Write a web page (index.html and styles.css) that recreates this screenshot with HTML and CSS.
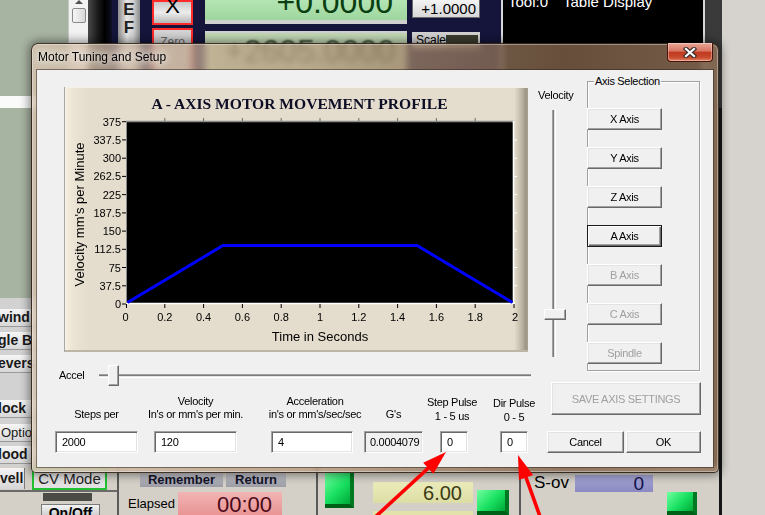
FILE: index.html
```html
<!DOCTYPE html>
<html>
<head>
<meta charset="utf-8">
<title>Motor Tuning and Setup</title>
<link rel="stylesheet" href="styles.css">
</head>
<body>
<div class="screen">
  <div class="top">
    <div class="tl"><div class="whitebar"></div></div>
    <div class="scroll"><div class="sb-up"></div><div class="sb-thumb"></div></div>
    <div class="dk"></div>
    <div class="nv w6"></div>
    <div class="ef"><span>E</span><span>F</span></div>
    <div class="nv w12"></div>
    <div class="xcol"><div class="xbtn">X</div><div class="zbtn">Zero</div></div>
    <div class="nv w12"></div>
    <div class="dro"><div class="dro1">+0.0000</div><div class="dro-g1"></div><div class="dro-g2"></div><div class="dro2">+2605.0000</div></div>
    <div class="nv w5"></div>
    <div class="stepcol"><div class="step">+1.0000</div><div class="stepgap"></div><div class="scale"><span>Scale</span><i></i></div></div>
    <div class="nv w21"></div>
    <div class="tool"><span>Tool:0</span><span class="td">Table Display</span></div>
    <div class="dk2"></div>
    <div class="rg"></div>
  </div>
  <div class="mid">
    <div class="lcol">
      <div class="lgreen"></div>
      <div class="lb m11">wind</div>
      <div class="lb m5">gle B</div>
      <div class="lb m5">evers</div>
      <div class="lb m27">lock</div>
      <div class="lb m6 thin">Optio</div>
      <div class="lb m4">lood</div>
    </div>
    <div class="mc"></div>
    <div class="rg edge"></div>
  </div>
  <div class="bot">
    <div class="seg1">
      <div class="row1"><div class="vell">vell</div><div class="cv">CV Mode</div></div>
      <div class="sep"></div>
      <div class="led"></div>
      <div class="onoff">On/Off</div>
    </div>
    <div class="vline"></div>
    <div class="seg2">
      <div class="rrow"><div class="mbtn rem">Remember</div><div class="mbtn ret">Return</div></div>
      <div class="erow"><div class="elab">Elapsed</div><div class="pink">00:00</div></div>
    </div>
    <div class="vline"></div>
    <div class="seg3">
      <div class="green g1"></div>
      <div class="ycol"><div class="ybox">6.00</div><div class="ybox2"></div></div>
      <div class="green g2"></div>
    </div>
    <div class="vline"></div>
    <div class="seg4">
      <div class="sov">S-ov</div>
      <div class="bbox">0</div>
      <div class="green g3"></div>
    </div>
    <div class="rg edge"></div>
  </div>
</div>

<div class="dialog">
  <div class="titlebar">
    <div class="title">Motor Tuning and Setup</div>
    <div class="close">
      <svg width="14" height="11" viewBox="0 0 14 11"><path d="M3 2L11 9M11 2L3 9" stroke="#3b3030" stroke-width="4.4" stroke-linecap="square"/><path d="M3 2L11 9M11 2L3 9" stroke="#ffffff" stroke-width="2.2" stroke-linecap="square"/></svg>
    </div>
  </div>
  <div class="client">
    <div class="upper">
      <div class="leftcol">
        <div class="chart">
          <svg width="464" height="265" viewBox="0 0 464 265">
            <text class="ctitle" x="235.5" y="22" text-anchor="middle">A - AXIS MOTOR MOVEMENT PROFILE</text>
            <rect x="62" y="34" width="388" height="183" fill="#000"/>
            <path d="M62 34.5H450" stroke="#8c8c8c" stroke-width="1.6"/>
            <path d="M62.5 34V217" stroke="#8c8c8c"/>
            <path d="M62 216.5H451" stroke="#ffffff" stroke-width="1.6"/>
            <path d="M449.5 34V217" stroke="#ffffff" stroke-width="1.6"/>
            <g stroke="#6a6a6a">
              <path d="M100.8 31V34M139.6 31V34M178.4 31V34M217.2 31V34M256 31V34M294.8 31V34M333.6 31V34M372.4 31V34M411.2 31V34"/>
            </g>
            <g stroke="#000">
              <path d="M62.5 217V221M100.8 217V221M139.6 217V221M178.4 217V221M217.2 217V221M256 217V221M294.8 217V221M333.6 217V221M372.4 217V221M411.2 217V221M450 217V221"/>
              <path d="M58 34.7H62M58 52.9H62M58 71.2H62M58 89.4H62M58 107.6H62M58 125.9H62M58 144.1H62M58 162.3H62M58 180.5H62M58 198.8H62M58 217H62"/>
            </g>
            <g stroke="#fff">
              <path d="M450 52.9H453M450 71.2H453M450 89.4H453M450 107.6H453M450 125.9H453M450 144.1H453M450 162.3H453M450 180.5H453M450 198.8H453"/>
            </g>
            <polyline points="63.5,215.5 159,158.5 353,158.5 448.5,215.5" fill="none" stroke="#0000ff" stroke-width="3"/>
            <g class="lab" text-anchor="end">
              <text x="57" y="38.7">375</text>
              <text x="57" y="56.9">337.5</text>
              <text x="57" y="75.2">300</text>
              <text x="57" y="93.4">262.5</text>
              <text x="57" y="111.6">225</text>
              <text x="57" y="129.9">187.5</text>
              <text x="57" y="148.1">150</text>
              <text x="57" y="166.3">112.5</text>
              <text x="57" y="184.5">75</text>
              <text x="57" y="202.8">37.5</text>
              <text x="57" y="221">0</text>
            </g>
            <g class="lab" text-anchor="middle">
              <text x="61.5" y="234">0</text>
              <text x="100.8" y="234">0.2</text>
              <text x="139.6" y="234">0.4</text>
              <text x="178.4" y="234">0.6</text>
              <text x="217.2" y="234">0.8</text>
              <text x="256" y="234">1</text>
              <text x="294.8" y="234">1.2</text>
              <text x="333.6" y="234">1.4</text>
              <text x="372.4" y="234">1.6</text>
              <text x="411.2" y="234">1.8</text>
              <text x="451" y="234">2</text>
            </g>
            <text class="axt" x="256" y="253.5" text-anchor="middle">Time in Seconds</text>
            <text class="axt" transform="translate(19.5,127.5) rotate(-90)" text-anchor="middle">Velocity mm's per Minute</text>
          </svg>
        </div>
        <div class="accel">
          <div class="alabel">Accel</div>
          <div class="htrack"><div class="hthumb"></div></div>
        </div>
      </div>
      <div class="velcol">
        <div class="vlabel">Velocity</div>
        <div class="vtrack"><div class="vthumb"></div></div>
      </div>
      <div class="group">
        <div class="legend">Axis Selection</div>
        <div class="btn gb">X Axis</div>
        <div class="btn gb">Y Axis</div>
        <div class="btn gb">Z Axis</div>
        <div class="btn gb default">A Axis</div>
        <div class="btn gb dis">B Axis</div>
        <div class="btn gb dis">C Axis</div>
        <div class="btn gb dis">Spindle</div>
      </div>
    </div>
    <div class="lower">
      <div class="fields">
        <div class="field f1"><div class="flabel">Steps per</div><div class="inp">2000</div></div>
        <div class="field f2"><div class="flabel">Velocity<br>In's or mm's per min.</div><div class="inp">120</div></div>
        <div class="field f3"><div class="flabel shift">Acceleration<br>in's or mm's/sec/sec</div><div class="inp">4</div></div>
        <div class="field f4"><div class="flabel">G's</div><div class="inp ro">0.0004079</div></div>
        <div class="field f5"><div class="flabel pulse sp">Step Pulse<br>1 - 5 us</div><div class="inp">0</div></div>
        <div class="field f6"><div class="flabel pulse dp">Dir Pulse<br>0 - 5</div><div class="inp">0</div></div>
      </div>
      <div class="actions">
        <div class="btn save dis">SAVE AXIS SETTINGS</div>
        <div class="okrow"><div class="btn cancel">Cancel</div><div class="btn ok">OK</div></div>
      </div>
    </div>
  </div>
</div>

<svg class="arrows" width="765" height="515" viewBox="0 0 765 515">
  <path d="M372 520L430 466.5" stroke="#ff0000" stroke-width="3.6"/>
  <polygon points="446,452 433.4,473.7 423.2,462.7" fill="#ff0000"/>
  <path d="M542 522L525.5 476" stroke="#ff0000" stroke-width="3.6"/>
  <polygon points="518,455 533.1,475.1 518.9,480.1" fill="#ff0000"/>
</svg>
</body>
</html>
```

FILE: styles.css
```css
body {
  margin: 0;
  width: 765px;
  height: 515px;
  overflow: hidden;
  position: relative;
  background: #d4d0c8;
  font-family: "Liberation Sans", Arial, sans-serif;
}

.screen {
  display: flex;
  flex-direction: column;
  width: 765px;
  height: 515px;
}

/* ---------- top strip of the Mach3 screen ---------- */
.top {
  display: flex;
  height: 108px;
  background: #15153c;
}
.tl {
  width: 68px;
  background: #a8b4a2;
  display: flex;
  flex-direction: column;
  justify-content: flex-end;
}
.whitebar { width: 40px; height: 12px; background: #fafafa; }
.scroll {
  width: 20px;
  box-sizing: border-box;
  background: #f2f2f2;
  border-left: 1px solid #c8c8c8;
  display: flex;
  flex-direction: column;
  align-items: center;
}
.sb-up {
  width: 0; height: 0;
  border-left: 4px solid transparent;
  border-right: 4px solid transparent;
  border-bottom: 4px solid #505050;
}
.sb-thumb {
  width: 14px; height: 15px;
  margin-top: 4px;
  box-sizing: border-box;
  border: 1px solid #8a8a8a;
  border-radius: 2px;
  background: linear-gradient(90deg, #f6f6f6, #d8d8d8);
}
.dk { width: 24px; background: linear-gradient(90deg, #4a4a4a, #1c1c1c 40%, #000 70%, #101024); }
.nv { background: #15153c; }
.w5 { width: 5px; } .w6 { width: 6px; } .w12 { width: 12px; } .w21 { width: 21px; }
.ef {
  width: 22px;
  background: linear-gradient(90deg, #8c8c8c, #e6e6e6 40%, #d0d0d0 70%, #8a8a8a);
  display: flex;
  flex-direction: column;
  align-items: center;
  padding-top: 1px;
  font: bold 17px/18px "Liberation Sans", Arial, sans-serif;
  color: #222;
}
.xcol { width: 41px; display: flex; flex-direction: column; gap: 3px; }
.xbtn {
  height: 25px;
  box-sizing: border-box;
  border: 2px solid #ff2a2a;
  background: linear-gradient(#c8c8c8, #ececec 50%, #b8b8b8);
  text-align: center;
  font: 22px/7px "Liberation Sans", Arial, sans-serif;
  color: #000;
}
.zbtn {
  flex: 1;
  border: 2px solid #ff2a2a;
  border-bottom: 0;
  background: linear-gradient(#d4d4d4, #b4b4b4);
  color: #666;
  font: 12px/14px "Liberation Sans", Arial, sans-serif;
  text-align: center;
  padding-top: 5px;
}
.dro { width: 202px; display: flex; flex-direction: column; }
.dro1 {
  height: 20px;
  background: linear-gradient(#b4e4b4, #9ed69e);
  text-align: right;
  padding-right: 14px;
  font: 32px/4px "Liberation Sans", Arial, sans-serif;
  color: #0a3f12;
}
.dro-g1 { height: 4px; background: #cfcfcf; }
.dro-g2 { height: 7px; background: #15153c; }
.dro2 {
  flex: 1;
  background: #c2d8b4;
  border-top: 2px solid #d0d0d0;
  text-align: right;
  padding-right: 12px;
  font: 32px/36px "Liberation Sans", Arial, sans-serif;
  color: transparent;
  text-shadow: 0 0 2px rgba(40, 60, 36, 0.9);
}
.stepcol { width: 68px; display: flex; flex-direction: column; }
.step {
  height: 18px;
  box-sizing: border-box;
  background: linear-gradient(#f4f4f4, #d8d8d8);
  border: 1px solid #6a6a6a;
  border-top: 0;
  text-align: right;
  padding-right: 3px;
  font: 15px/17px "Liberation Sans", Arial, sans-serif;
  color: #000;
}
.stepgap { height: 14px; }
.scale {
  height: 16px;
  background: #d2d2d2;
  display: flex;
  align-items: center;
  justify-content: space-between;
  padding: 0 2px 0 4px;
  font: 12px/14px "Liberation Sans", Arial, sans-serif;
}
.scale i { display: block; width: 33px; height: 10px; background: #3c3c30; }
.tool {
  width: 204px;
  box-sizing: border-box;
  background: #000;
  border-left: 2px solid #d8d8d8;
  border-right: 2px solid #d8d8d8;
  color: #fff;
  padding: 2px 0 0 5px;
  font: 15px/0 "Liberation Sans", Arial, sans-serif;
  white-space: nowrap;
}
.tool .td { margin-left: 15px; }
.dk2 { width: 17px; background: #3a3a3a; }
.rg {
  width: 43px;
  box-sizing: border-box;
  background: #d6d3ce;
}
.rg.edge {
  width: 46px;
  border-left: 3px solid #161616;
}

/* ---------- middle ---------- */
.mid { display: flex; height: 358px; }
.lcol { width: 40px; background: #d2d2d2; display: flex; flex-direction: column; }
.lgreen { height: 190px; background: #a8b4a2; }
.lb {
  height: 18px;
  box-sizing: border-box;
  background: linear-gradient(#f6f6f6, #d8d8d8);
  border-bottom: 1px solid #9a9a9a;
  font: bold 14px/17px "Liberation Sans", Arial, sans-serif;
  color: #1a1a1a;
  white-space: nowrap;
  overflow: hidden;
  text-indent: -2px;
}
.lb.thin { font-weight: normal; font-size: 13px; text-indent: 1px; }
.m4 { margin-top: 4px; } .m5 { margin-top: 5px; } .m6 { margin-top: 6px; }
.m11 { margin-top: 11px; } .m27 { margin-top: 27px; }
.mc {
  flex: 1;
  background:
    linear-gradient(90deg, rgba(200, 196, 188, 0) 0, rgba(200, 196, 188, 0) 640px, rgba(58, 44, 34, 0.85) 668px),
    linear-gradient(#c8c4bc, #c8c4bc);
}

/* ---------- bottom ---------- */
.bot { display: flex; height: 49px; background: #d4d0c8; }
.seg1 { width: 117px; display: flex; flex-direction: column; }
.row1 { display: flex; height: 25px; align-items: flex-start; }
.vell {
  width: 25px; height: 21px; margin-top: 2px;
  box-sizing: border-box;
  background: linear-gradient(#f4f4f4, #d6d6d6);
  border-right: 1px solid #7a7a7a;
  font: bold 14px/21px "Liberation Sans", Arial, sans-serif;
  color: #1a1a1a;
  overflow: hidden;
  white-space: nowrap;
}
.cv {
  margin: 1px 0 0 7px;
  width: 75px; height: 23px;
  box-sizing: border-box;
  border: 2px solid #22c032;
  background: #e2e2e2;
  font: 15px/19px "Liberation Sans", Arial, sans-serif;
  text-align: center;
  color: #222;
}
.sep { height: 2px; background: #6a6a6a; }
.led { margin: 1px 0 0 43px; width: 49px; height: 10px; background: #4b4b45; }
.onoff {
  margin: 3px 0 0 41px;
  width: 57px; height: 12px;
  background: linear-gradient(#f4f4f4, #d0d0d0);
  border: 1px solid #7a7a7a;
  border-bottom: 0;
  font: bold 14px/16px "Liberation Sans", Arial, sans-serif;
  text-align: center;
  overflow: hidden;
}
.vline { width: 2px; background: #5a5a5a; }
.seg2 { width: 197px; display: flex; flex-direction: column; }
.rrow { display: flex; margin-top: 7px; }
.mbtn {
  height: 14px;
  background: linear-gradient(#c4c4cc, #9c9ca6);
  font: bold 13px/14px "Liberation Sans", Arial, sans-serif;
  color: #14142a;
  text-align: center;
}
.rem { margin-left: 21px; width: 83px; }
.ret { margin-left: 3px; width: 60px; }
.erow { display: flex; margin-top: 5px; }
.elab { margin-left: 9px; width: 50px; font: 13px/23px "Liberation Sans", Arial, sans-serif; color: #000; }
.pink {
  width: 104px; height: 23px;
  box-sizing: border-box;
  background: linear-gradient(#f2b4b4, #e89494);
  text-align: right;
  padding-right: 10px;
  font: 22px/25px "Liberation Sans", Arial, sans-serif;
  color: #4a0a18;
}
.seg3 { width: 201px; display: flex; align-items: flex-start; }
.green {
  box-sizing: border-box;
  background: linear-gradient(135deg, #70ffa0, #18e060 55%, #00a838);
  border-right: 4px solid #007a22;
  border-bottom: 4px solid #006018;
}
.g1 { margin: 7px 0 0 7px; width: 29px; height: 35px; }
.ycol { margin: 16px 0 0 19px; width: 100px; display: flex; flex-direction: column; }
.ybox {
  height: 21px;
  background: linear-gradient(#ececbc, #dcdca4);
  text-align: right;
  padding-right: 11px;
  font: 20px/22px "Liberation Sans", Arial, sans-serif;
  color: #3a3a12;
}
.ybox2 { height: 10px; margin-top: 8px; background: #e2e2aa; }
.g2 { margin: 24px 0 0 4px; width: 32px; height: 25px; }
.seg4 { width: 198px; display: flex; align-items: flex-start; }
.sov { margin: 8px 0 0 13px; width: 41px; font: 17px/18px "Liberation Sans", Arial, sans-serif; color: #000; }
.bbox {
  margin-top: 9px;
  width: 78px; height: 17px;
  background: linear-gradient(#a6a6d6, #8a8ac2);
  text-align: right;
  padding-right: 9px;
  box-sizing: border-box;
  font: 19px/18px "Liberation Sans", Arial, sans-serif;
  color: #10104a;
}
.g3 { margin: 26px 0 0 14px; width: 30px; height: 23px; }

/* ---------- dialog window ---------- */
.dialog {
  position: absolute;
  left: 31px;
  top: 43px;
  width: 688px;
  height: 430px;
  box-sizing: border-box;
  display: flex;
  flex-direction: column;
  border: 1px solid rgba(40, 28, 18, 0.85);
  border-radius: 7px 7px 5px 5px;
  background:
    linear-gradient(90deg, rgba(255, 255, 255, 0.16), rgba(255, 255, 255, 0) 30%),
    linear-gradient(90deg, rgba(204, 180, 156, 0.76), rgba(180, 152, 124, 0.72) 40%, rgba(128, 98, 74, 0.8) 78%, rgba(146, 116, 90, 0.8));
  backdrop-filter: blur(3px);
  box-shadow: 0 0 10px 2px rgba(0, 0, 0, 0.45), inset 0 0 0 1px rgba(255, 255, 255, 0.35);
}
.titlebar { height: 26px; display: flex; align-items: flex-start; }
.title {
  padding: 6px 0 0 6px;
  font: 12px/14px "Liberation Sans", Arial, sans-serif;
  color: #000;
  text-shadow: 0 0 6px #fff, 0 0 10px rgba(255, 255, 255, 0.9);
}
.close {
  margin: -1px 5px 0 auto;
  width: 46px;
  height: 19px;
  box-sizing: border-box;
  border: 1px solid #4a1408;
  border-top: 0;
  border-radius: 0 0 4px 4px;
  background: linear-gradient(#eaa898, #d87460 45%, #c03a20 52%, #c84a2c 80%, #e4876a);
  box-shadow: inset 0 0 0 1px rgba(255, 255, 255, 0.35);
  display: flex;
  align-items: center;
  justify-content: center;
}
.client {
  flex: 1;
  margin: 0 5px 5px 5px;
  background: #f0f0f0;
  box-shadow: 0 0 0 1px rgba(50, 40, 30, 0.55);
  display: flex;
  flex-direction: column;
  font-size: 11px;
  letter-spacing: -0.3px;
  color: #000;
}
.upper { display: flex; height: 312px; align-items: flex-start; }
.leftcol { width: 501px; padding-left: 22px; box-sizing: border-box; display: flex; flex-direction: column; }
.chart {
  margin: 17px 0 0 5px;
  width: 464px;
  height: 265px;
  letter-spacing: 0;
  background: linear-gradient(90deg, #f9f2e2 0, #ebe3d3 10px, #e4dccc 24px, #e4dccc 450px, #d2cab9 454px, #b4ac9c 459px, #9a9282 462px, #aca494 464px);
  box-shadow: inset 1px 0 0 #a8a8a8, inset 0 1px 0 #f6f0e2, inset 0 -2px 0 #bdb5a5;
}
.chart svg { display: block; }
.ctitle { font-family: "Liberation Serif", "Times New Roman", serif; font-weight: bold; font-size: 15.6px; fill: #0d0d26; }
.lab text { font-family: "Liberation Sans", Arial, sans-serif; font-size: 11px; fill: #000; }
.axt { font-family: "Liberation Sans", Arial, sans-serif; font-size: 13px; fill: #000; }

.accel { margin-top: 13px; height: 21px; display: flex; align-items: center; }
.alabel { width: 40px; line-height: 13px; }
.htrack {
  position: relative;
  width: 432px;
  height: 4px;
  box-sizing: border-box;
  border-top: 1px solid #a0a0a0;
  border-bottom: 1px solid #ffffff;
  background: #e3e3e3;
  box-shadow: inset 0 1px 0 #7a7a7a;
}
.hthumb {
  position: absolute;
  left: 9px;
  top: -10px;
  width: 11px;
  height: 21px;
  box-sizing: border-box;
  background: #f0f0f0;
  border: 1px solid;
  border-color: #fff #696969 #696969 #fff;
  box-shadow: inset -1px -1px 0 #a0a0a0;
}
.velcol { width: 49px; display: flex; flex-direction: column; }
.vlabel { padding-top: 19px; line-height: 12px; }
.vtrack {
  position: relative;
  margin: 9px 0 0 14px;
  width: 4px;
  height: 247px;
  box-sizing: border-box;
  border-left: 1px solid #a0a0a0;
  border-right: 1px solid #ffffff;
  background: #e3e3e3;
  box-shadow: inset 1px 0 0 #7a7a7a;
}
.vthumb {
  position: absolute;
  left: -9px;
  top: 199px;
  width: 22px;
  height: 11px;
  box-sizing: border-box;
  background: #f0f0f0;
  border: 1px solid;
  border-color: #fff #696969 #696969 #fff;
  box-shadow: inset -1px -1px 0 #a0a0a0;
}
.group {
  position: relative;
  margin-top: 11px;
  width: 113px;
  height: 290px;
  box-sizing: border-box;
  border: 1px solid #a0a0a0;
  box-shadow: inset 1px 1px 0 #fff, 1px 1px 0 #fff;
  padding-top: 26px;
  display: flex;
  flex-direction: column;
  gap: 17px;
}
.legend {
  position: absolute;
  left: 6px;
  top: -7px;
  padding: 0 1px;
  background: #f0f0f0;
  line-height: 13px;
  white-space: nowrap;
}
.btn {
  box-sizing: border-box;
  height: 22px;
  display: flex;
  align-items: center;
  justify-content: center;
  background: #f0f0f0;
  border: 1px solid;
  border-color: #fff #696969 #696969 #fff;
  box-shadow: inset -1px -1px 0 #a0a0a0, inset 1px 1px 0 #e3e3e3;
  font-size: 11px;
  color: #000;
  white-space: nowrap;
}
.btn.default {
  border-color: #1a1a1a;
  box-shadow: inset 1px 1px 0 #fff, inset -1px -1px 0 #696969, inset -2px -2px 0 #a0a0a0;
}
.btn.dis { color: #a0a0a0; }
.gb { width: 75px; margin-left: -1px; flex: none; }

.lower { display: flex; height: 85px; }
.fields {
  margin-left: 18px;
  width: 473px;
  height: 71px;
  display: flex;
  align-items: flex-end;
}
.field { display: flex; flex-direction: column; align-items: center; justify-content: flex-end; }
.flabel { white-space: nowrap; text-align: center; line-height: 13px; margin-bottom: 10px; }
.flabel.shift { margin-left: 6px; }
.flabel.pulse { line-height: 14px; margin-bottom: 8px; }
.flabel.sp { margin-right: 4px; }
.flabel.dp { margin-bottom: 7px; }
.f1 { width: 83px; }
.f2 { width: 83px; margin-left: 16px; }
.f3 { width: 82px; margin-left: 34px; }
.f4 { width: 59px; margin-left: 11px; }
.f5 { width: 28px; margin-left: 17px; }
.f6 { width: 28px; margin-left: 32px; }
.inp {
  align-self: stretch;
  box-sizing: border-box;
  height: 22px;
  background: #fff;
  border: 1px solid;
  border-color: #a0a0a0 #fff #fff #a0a0a0;
  box-shadow: inset 1px 1px 0 #696969, inset -1px -1px 0 #e3e3e3;
  padding-left: 6px;
  line-height: 20px;
  white-space: nowrap;
  overflow: hidden;
}
.inp.ro { background: #f0f0f0; padding-left: 5px; }
.actions {
  margin-left: 19px;
  width: 154px;
  display: flex;
  flex-direction: column;
  align-items: flex-end;
}
.save { width: 150px; height: 33px; }
.okrow { display: flex; gap: 2px; margin-top: 16px; }
.cancel { width: 77px; }
.ok { width: 75px; }

.arrows {
  position: absolute;
  left: 0;
  top: 0;
  pointer-events: none;
}
```
